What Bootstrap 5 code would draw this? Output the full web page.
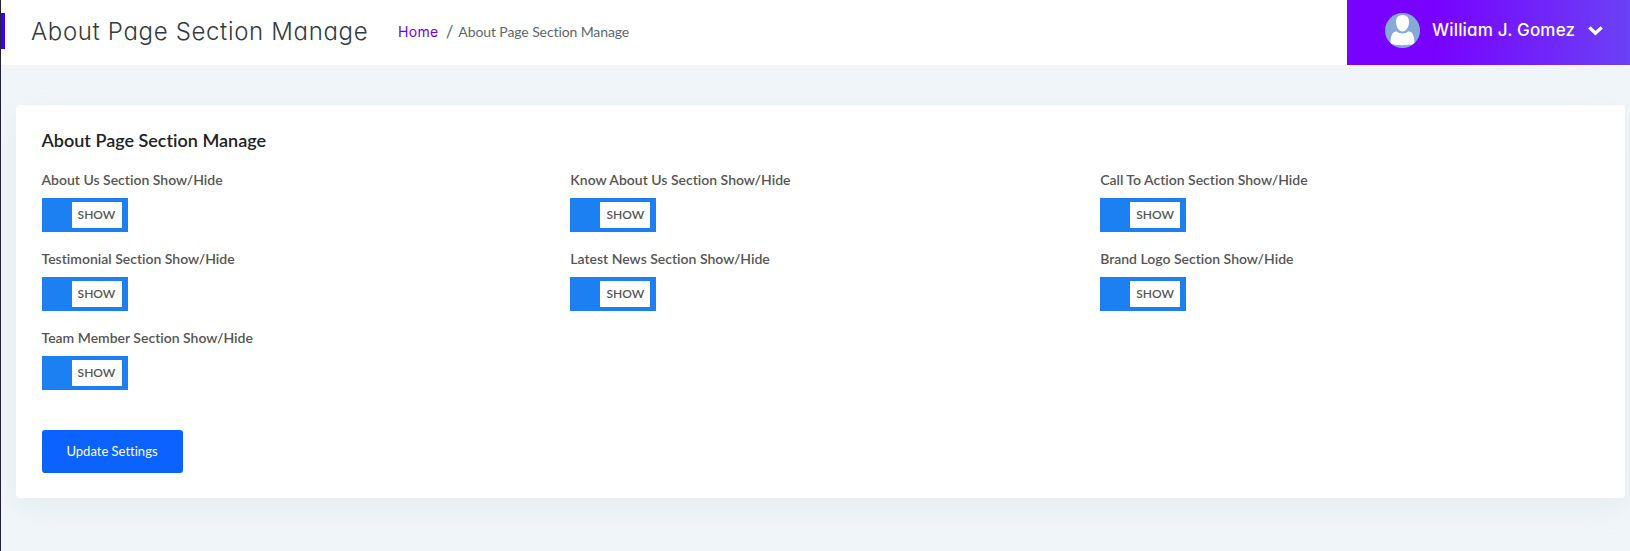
<!DOCTYPE html>
<html lang="en">
<head>
<meta charset="utf-8">
<meta name="viewport" content="width=device-width, initial-scale=1">
<title>About Page Section Manage</title>
<link href="https://cdn.jsdelivr.net/npm/bootstrap@5.3.0/dist/css/bootstrap.min.css" rel="stylesheet">
<style>
body{font-family:Lato,"Open Sans",sans-serif;font-size:14px;line-height:21px;color:#555;background:#f0f5f9;min-height:551px;overflow:hidden;font-variant-ligatures:none}
main{min-width:0}
.side-edge{width:1px;background:#222232;box-shadow:0 0 30px rgba(30,30,50,.12);z-index:5}
.side-marker{left:1px;top:13px;width:4px;height:36px;background:#3a00f5}
.geo{font-family:Inter,sans-serif;font-feature-settings:"cv11"}
.title-area{height:65px}
.page-title{font-size:24px;font-weight:300;line-height:29px;color:#313b3d;width:337px;margin:1px 30px 0;letter-spacing:.66px}
.crumbs{color:#5c6769;line-height:21px;margin-top:2px}
.crumbs a{color:#6a00f5;font-size:14px;letter-spacing:.35px}
.crumbs .slash{margin:0 5px 0 7px;font-size:17px}
.crumbs .current{letter-spacing:-.1px}
.user-profile{width:283px;padding-left:38px;color:#fff;background:linear-gradient(to right,#7801ff 30%,#6a42f5 100%)}
.user-name{font-size:17px;font-weight:500;letter-spacing:.18px;margin-left:12px;width:144px}
.chevron{margin-left:12px}
.settings-card{margin:40px 5px 0 15px;padding:24px 25.5px 25px;height:393px;border-radius:4px;box-shadow:0 10px 30px rgba(150,190,190,.13)}
.settings-title{font-size:18px;font-weight:600;line-height:22px;color:#202225;margin-bottom:19px}
.settings-row{--bs-gutter-x:30px}
.toggle-field{height:79px}
.toggle-field:nth-child(3n+2){padding-left:14.500px}
.toggle-field label{font-weight:600;line-height:19px;margin-bottom:9px;display:block}
.toggle-switch{width:86px;height:34px;padding:4px 6px 4px 30px;background:#1d80f2}
.toggle-state{width:50px;height:26px;background:#fff;font-size:12px;font-weight:600;line-height:25px;text-align:center}
.update-btn{width:141px;height:43px;background:#0b62ff;color:#fff;border:0;border-radius:3px;font-size:13px;margin-top:23px;padding:0;font-variant-ligatures:none}
.update-btn:hover{background:#0853d8;color:#fff}
</style>
</head>
<body class="d-flex">
<aside class="side-edge position-relative flex-shrink-0"><span class="side-marker position-absolute"></span></aside>
<main class="flex-grow-1">
<header class="title-area bg-white d-flex align-items-stretch">
<div class="d-flex align-items-center flex-grow-1 pb-1">
<h1 class="page-title geo text-nowrap">About Page Section Manage</h1>
<nav class="crumbs d-flex align-items-center" aria-label="Breadcrumb"><a href="#" class="geo text-decoration-none">Home</a><span class="slash">/</span><span class="current">About Page Section Manage</span></nav>
</div>
<div class="user-profile d-flex align-items-center pb-1">
<svg class="flex-shrink-0" width="35" height="35" viewBox="0 0 35 35"><defs><clipPath id="face"><circle cx="17.5" cy="17.5" r="17.5"/></clipPath></defs><g clip-path="url(#face)"><path fill="#86aad8" d="M0 0h35v35H0z"/><path fill="#fff" d="M17.500 2c4.300 0 6.700 3 6.500 7.300-.2 4.800-2.800 9.200-6.500 9.200S11.200 14.100 11 9.300C10.800 5 13.200 2 17.500 2zM11.500 18.200c3.400 2.900 8.600 2.900 12 0 4.200.6 6 4.500 6 12.800-6 1.500-18 1.500-24 0 0-8.300 1.800-12.200 6-12.800z"/></g></svg>
<span class="user-name geo text-nowrap">William J. Gomez</span>
<svg class="chevron flex-shrink-0" width="15" height="10" viewBox="0 0 15 10" fill="none"><path d="M2.500 2.500l5 4.800 5-4.800" stroke="#fff" stroke-width="3.300" stroke-linecap="square"/></svg>
</div>
</header>
<section class="settings-card bg-white">
<h2 class="settings-title">About Page Section Manage</h2>
<form>
<div class="row settings-row">
<div class="col-4 toggle-field"><label>About Us Section Show/Hide</label><div class="toggle-switch"><div class="toggle-state">SHOW</div></div></div>
<div class="col-4 toggle-field"><label>Know About Us Section Show/Hide</label><div class="toggle-switch"><div class="toggle-state">SHOW</div></div></div>
<div class="col-4 toggle-field"><label>Call To Action Section Show/Hide</label><div class="toggle-switch"><div class="toggle-state">SHOW</div></div></div>
<div class="col-4 toggle-field"><label>Testimonial Section Show/Hide</label><div class="toggle-switch"><div class="toggle-state">SHOW</div></div></div>
<div class="col-4 toggle-field"><label>Latest News Section Show/Hide</label><div class="toggle-switch"><div class="toggle-state">SHOW</div></div></div>
<div class="col-4 toggle-field"><label>Brand Logo Section Show/Hide</label><div class="toggle-switch"><div class="toggle-state">SHOW</div></div></div>
<div class="col-4 toggle-field"><label>Team Member Section Show/Hide</label><div class="toggle-switch"><div class="toggle-state">SHOW</div></div></div>
</div>
<button type="button" class="btn update-btn">Update Settings</button>
</form>
</section>
</main>
<script src="https://cdn.jsdelivr.net/npm/bootstrap@5.3.0/dist/js/bootstrap.bundle.min.js"></script>
</body>
</html>
